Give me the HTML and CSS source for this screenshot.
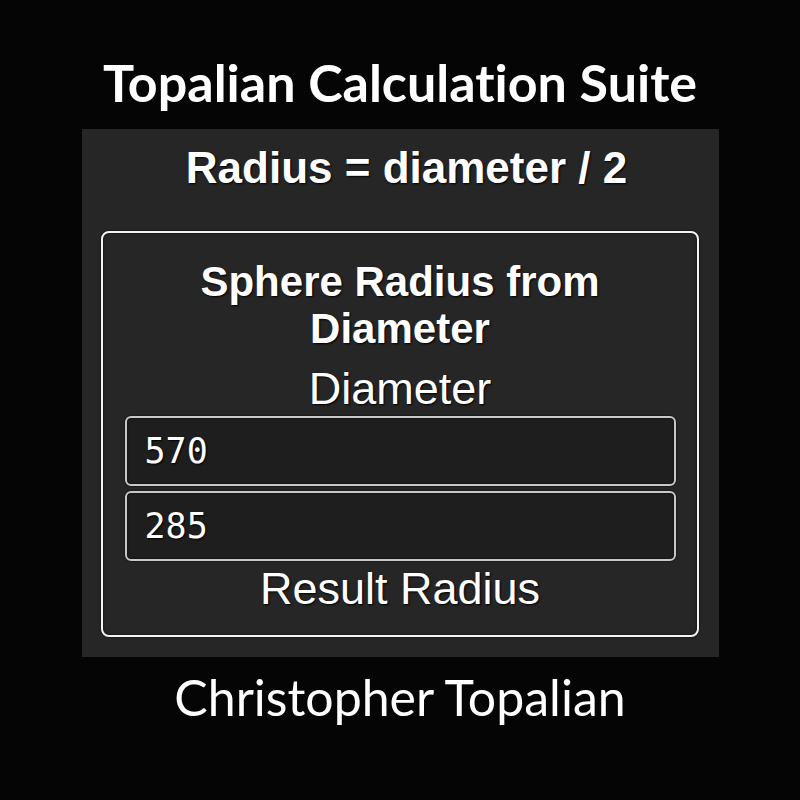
FILE: index.html
```html
<!DOCTYPE html>
<html lang="en">
<head>
    <meta charset="UTF-8">
    <meta name="viewport" content="width=device-width, initial-scale=1.0">
    <title>Topalian Calculation Suite</title>
    <link rel="stylesheet" href="styles.css">
</head>
<body>

    <div class="page">
        <h1 class="suite-title">Topalian Calculation Suite</h1>

        <div class="panel">
            <h2 class="formula">Radius = diameter / 2</h2>

            <div class="calculator">
                <h3 class="calc-title">Sphere Radius from Diameter</h3>
                <label class="field-label" for="diameter">Diameter</label>
                <input type="text" id="diameter" class="calc-input" value="570">
                <input type="text" id="result" class="calc-input result-input" value="285" readonly>
                <div class="field-label result-label">Result Radius</div>
            </div>
        </div>

        <div class="author">Christopher Topalian</div>
    </div>

    <script>
        const diameterInput = document.getElementById("diameter");
        const resultInput = document.getElementById("result");

        diameterInput.addEventListener("input", () => {
            const diameter = parseFloat(diameterInput.value);
            resultInput.value = isNaN(diameter) ? '' : diameter / 2;
        });
    </script>

</body>
</html>
```

FILE: styles.css
```css
body {
    margin: 0;
    padding: 0;
    background-color: #050505;
    color: #fff;
    font-family: "Liberation Sans", Arial, sans-serif;
}

.page {
    width: 800px;
    height: 800px;
    display: flex;
    flex-direction: column;
    align-items: center;
}

.suite-title {
    margin: 54px 0 0 0;
    font-family: Lato, "Open Sans", sans-serif;
    font-size: 52px;
    font-weight: 700;
    line-height: 56px;
    font-variant-ligatures: none;
}

.panel {
    width: 637px;
    height: 528px;
    margin-top: 19px;
    box-sizing: border-box;
    padding: 15px 20px 20px 19px;
    background-color: #262626;
    display: flex;
    flex-direction: column;
    align-items: center;
}

.formula {
    margin: 0 0 0 14px;
    font-size: 44px;
    font-weight: 700;
    line-height: 48px;
    text-shadow: 1px 1px 2px #000;
}

.calculator {
    width: 100%;
    margin-top: 39px;
    box-sizing: border-box;
    padding: 25px 21px 20px 22px;
    border: 2px solid #f4f4f4;
    border-radius: 8px;
    box-shadow: 0 0 2px #000, inset 0 0 2px #000;
    display: flex;
    flex-direction: column;
    align-items: center;
}

.calc-title {
    margin: 0 20px;
    font-size: 42px;
    font-weight: 700;
    line-height: 47px;
    text-align: center;
    text-shadow: 1px 1px 2px #000;
}

.field-label {
    margin-top: 11px;
    font-size: 45px;
    line-height: 52px;
    text-shadow: 1px 1px 2px #000;
}

.result-label {
    margin-top: 2px;
}

.calc-input {
    width: 100%;
    height: 70px;
    box-sizing: border-box;
    margin: 1px 0 0 0;
    padding: 0 18px;
    background-color: #1e1e1e;
    border: 2px solid #c8c8c8;
    border-radius: 6px;
    box-shadow: 0 0 2px #000, inset 0 0 2px #000;
    color: #fff;
    font-family: "DejaVu Sans Mono", monospace;
    font-size: 35px;
    text-shadow: 1px 1px 2px #000;
    outline: none;
}

.result-input {
    margin-top: 5px;
}

.author {
    margin-top: 12px;
    font-family: Lato, "Open Sans", sans-serif;
    font-size: 50px;
    line-height: 56px;
}
```
